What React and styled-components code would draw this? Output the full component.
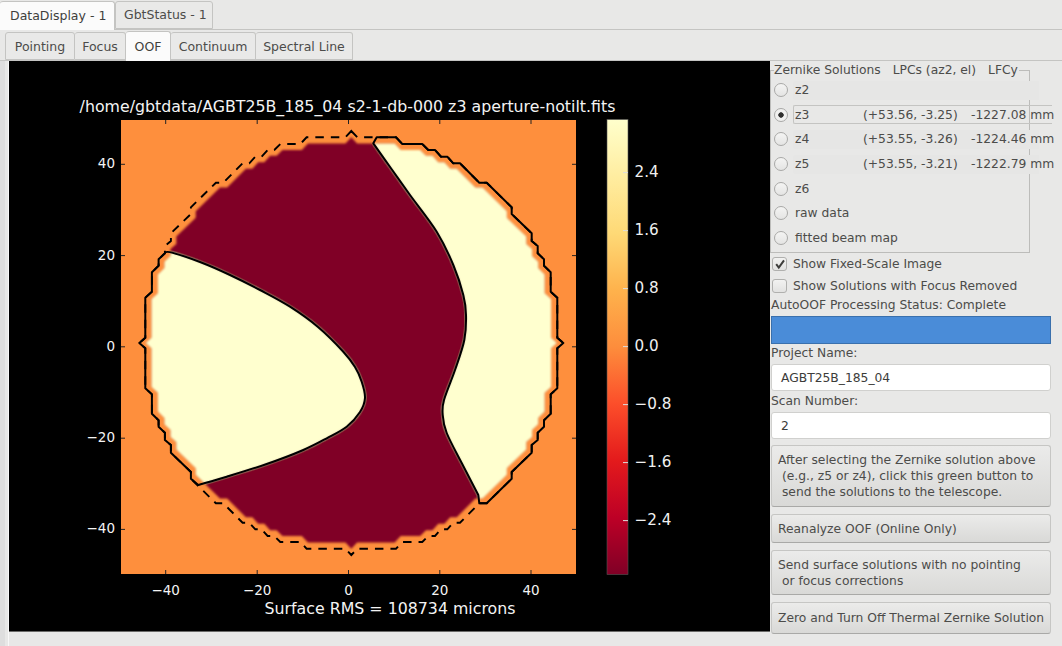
import React from 'react';
import styled, { createGlobalStyle } from 'styled-components';

const GlobalStyle = createGlobalStyle`
  html, body {
    margin: 0;
    padding: 0;
    background: #e8e8e7;
    overflow: hidden;
  }
  body {
    font-family: "DejaVu Sans", sans-serif;
    font-size: 12.3px;
    color: #4c4c4a;
  }
`;

// one quarter of the aperture contour, top tip round to the right tip, relative to its centre
const CX = 351.3;
const CY = 343;
const quarter = [
  [0, -212], [6, -205.7], [44.7, -205.7], [51, -199], [71, -199], [77, -193], [83.7, -193],
  [89.7, -186.3], [96, -186.3], [102, -179.7], [108.7, -179.7], [128, -160.3], [135.4, -160.3],
  [160.4, -135.7], [160.4, -129], [180.4, -109.7], [180.4, -102], [186.4, -97], [186.4, -89.7],
  [192.7, -83.7], [192.7, -77.3], [199.4, -70.7], [199.4, -51.3], [206, -45.3], [206, -5.3], [212, 0],
];

const mirror = (sx, sy) => quarter.map(([dx, dy]) => [CX + sx * dx, CY + sy * dy]);
const arcTopRight = mirror(1, 1);
const arcBottomRight = mirror(1, -1).reverse();
const arcBottomLeft = mirror(-1, -1);
const arcTopLeft = mirror(-1, 1).reverse();

const line = (pts) => pts.map(([x, y]) => `L${x.toFixed(1)} ${y.toFixed(1)}`).join(' ');

// catmull-rom through the points, for the smooth contours
const smooth = (pts) => {
  let d = '';
  for (let i = 0; i < pts.length - 1; i++) {
    const p0 = pts[i - 1] || pts[i];
    const p1 = pts[i];
    const p2 = pts[i + 1];
    const p3 = pts[i + 2] || p2;
    const c1 = [p1[0] + (p2[0] - p0[0]) / 6, p1[1] + (p2[1] - p0[1]) / 6];
    const c2 = [p2[0] - (p3[0] - p1[0]) / 6, p2[1] - (p3[1] - p1[1]) / 6];
    d += `C${c1[0].toFixed(1)} ${c1[1].toFixed(1)} ${c2[0].toFixed(1)} ${c2[1].toFixed(1)} ${p2[0].toFixed(1)} ${p2[1].toFixed(1)} `;
  }
  return d;
};

const ringPath = `M${line([...arcTopRight, ...arcBottomRight, ...arcBottomLeft, ...arcTopLeft]).slice(1)} Z`;

const rightLobePath = `M373.3 143.3 L376.7 137.3 ${line(arcTopRight.slice(2))} ${line(arcBottomRight.slice(0, 15))} L479.3 503.3 L478.3 495 ${smooth([
  [478.3, 495], [461.7, 463], [446.7, 433], [442.7, 415], [444, 400], [455, 370], [464.3, 340],
  [466, 315], [463.3, 295], [453.3, 265], [436.7, 231.7], [410, 195], [391.5, 169], [373.3, 143.3],
])} Z`;

const leftLobePath = `M198.3 485 ${line(arcBottomLeft.slice(13))} ${line(arcTopLeft.slice(1, 8))} L165 252.3 ${smooth([
  [165, 252.3], [172, 252.6], [200, 262], [230, 275], [260, 290], [290, 306.7], [318, 327], [343.3, 351.7],
  [355, 367], [361.7, 381.7], [365, 398], [360, 412], [346.7, 426.7], [326.7, 438.3], [303.3, 450],
  [266.7, 464], [226.7, 476.7], [198.3, 485],
])} Z`;

const xTicks = [
  { x: 165.7, label: '−40' },
  { x: 257.2, label: '−20' },
  { x: 348.5, label: '0' },
  { x: 439.8, label: '20' },
  { x: 531, label: '40' },
];
const yTicks = [
  { y: 164.3, label: '40' },
  { y: 255.6, label: '20' },
  { y: 346.8, label: '0' },
  { y: 438.2, label: '−20' },
  { y: 529.4, label: '−40' },
];
const barTicks = [
  { y: 172.6, label: '2.4' },
  { y: 230.6, label: '1.6' },
  { y: 288.6, label: '0.8' },
  { y: 346.6, label: '0.0' },
  { y: 404.6, label: '−0.8' },
  { y: 462.6, label: '−1.6' },
  { y: 520.6, label: '−2.4' },
];
const colormap = ['#ffffcc', '#ffeda0', '#fed976', '#feb24c', '#fd8d3c', '#fc4e2a', '#e31a1c', '#bd0026', '#800026'];

const innerTabs = [
  { label: 'Pointing', width: 70 },
  { label: 'Focus', width: 51 },
  { label: 'OOF', width: 45, active: true },
  { label: 'Continuum', width: 85 },
  { label: 'Spectral Line', width: 97 },
];

const solutions = [
  { name: 'z2', ghost: true },
  { name: 'z3', lpc: '(+53.56, -3.25)', lfc: '-1227.08 mm', selected: true },
  { name: 'z4', lpc: '(+53.55, -3.26)', lfc: '-1224.46 mm', ghost: true },
  { name: 'z5', lpc: '(+53.55, -3.21)', lfc: '-1222.79 mm', ghost: true },
  { name: 'z6' },
  { name: 'raw data' },
  { name: 'fitted beam map' },
];

const Plot = () => (
  <PlotSvg viewBox="9 61 761 570" width="761" height="570">
    <defs>
      <clipPath id="aperture">
        <path d={ringPath} transform={`translate(${CX} ${CY}) scale(0.97) translate(${-CX} ${-CY})`} />
      </clipPath>
      <clipPath id="axes">
        <rect x="121" y="120" width="455" height="454" />
      </clipPath>
      <filter id="soften" x="-5%" y="-5%" width="110%" height="110%">
        <feGaussianBlur stdDeviation="1.2" />
      </filter>
      <linearGradient id="colorbar" x1="0" y1="0" x2="0" y2="1">
        {colormap.map((c, i) => (
          <stop key={c} offset={i / (colormap.length - 1)} stopColor={c} />
        ))}
      </linearGradient>
    </defs>

    <text x="347.5" y="112" fontSize="15.8" fill="#f4f4f4" textAnchor="middle">
      /home/gbtdata/AGBT25B_185_04 s2-1-db-000 z3 aperture-notilt.fits
    </text>

    <rect x="121" y="120" width="455" height="454" fill="#fe8f3d" />
    <g clipPath="url(#axes)">
      <g filter="url(#soften)">
        <g clipPath="url(#aperture)">
          <rect x="121" y="120" width="455" height="454" fill="#800026" />
          <path d={leftLobePath} fill="#ffffcf" />
          <path d={rightLobePath} fill="#ffffcf" />
        </g>
      </g>
      <path d={ringPath} fill="none" stroke="#000" strokeWidth="1.9" strokeDasharray="8.5 7" />
      <path d={leftLobePath} fill="none" stroke="#000" strokeWidth="2" strokeLinejoin="round" />
      <path d={rightLobePath} fill="none" stroke="#000" strokeWidth="2" strokeLinejoin="round" />
    </g>

    {xTicks.map((t) => (
      <g key={t.x}>
        <path d={`M${t.x} 120v4M${t.x} 574v-4`} stroke="#222" strokeWidth="1" />
        <text x={t.x} y="595" fontSize="13.5" fill="#f4f4f4" textAnchor="middle">{t.label}</text>
      </g>
    ))}
    {yTicks.map((t) => (
      <g key={t.y}>
        <path d={`M121 ${t.y}h4M576 ${t.y}h-4`} stroke="#222" strokeWidth="1" />
        <text x="115" y={t.y + 4} fontSize="13.5" fill="#f4f4f4" textAnchor="end">{t.label}</text>
      </g>
    ))}

    <rect x="607" y="119.5" width="21" height="455" fill="url(#colorbar)" stroke="#555" strokeWidth="0.6" />
    {barTicks.map((t) => (
      <g key={t.y}>
        <path d={`M623 ${t.y}h5`} stroke="#ddd" strokeWidth="1" />
        <text x="634.5" y={t.y + 4.5} fontSize="15.2" fill="#f0f0f0">{t.label}</text>
      </g>
    ))}

    <text x="390" y="614" fontSize="15.8" fill="#f4f4f4" textAnchor="middle">Surface RMS = 108734 microns</text>
  </PlotSvg>
);

export default function App() {
  return (
    <Page>
      <GlobalStyle />
      <OuterTabs>
        <OuterTab $active>DataDisplay - 1</OuterTab>
        <OuterTab>GbtStatus - 1</OuterTab>
      </OuterTabs>
      <InnerTabs>
        {innerTabs.map((t) => (
          <InnerTab key={t.label} $width={t.width} $active={t.active}>{t.label}</InnerTab>
        ))}
      </InnerTabs>
      <Pane>
        <Plot />
        <Side>
          <SolutionsBox>
            <BoxTitle>
              <span>Zernike Solutions</span>
              <span>LPCs (az2, el)</span>
              <span>LFCy</span>
            </BoxTitle>
            {solutions.map((s) => (
              <SolutionRow key={s.name}>
                <Radio $checked={s.selected} />
                <SolutionText $selected={s.selected} $ghost={s.ghost}>
                  <SolutionName>{s.name}</SolutionName>
                  {s.lpc && <SolutionLpc>{s.lpc}</SolutionLpc>}
                  {s.lfc && <span>{s.lfc}</span>}
                </SolutionText>
              </SolutionRow>
            ))}
          </SolutionsBox>

          <CheckRow>
            <CheckBox>
              <svg width="12" height="12" viewBox="0 0 12 12">
                <path d="M2.2 6.2 L4.8 9.6 L10 2.4" fill="none" stroke="#3d3d3b" strokeWidth="2" />
              </svg>
            </CheckBox>
            Show Fixed-Scale Image
          </CheckRow>
          <CheckRow>
            <CheckBox />
            Show Solutions with Focus Removed
          </CheckRow>

          <FieldLabel $top={1}>AutoOOF Processing Status: Complete</FieldLabel>
          <ProgressBar />
          <FieldLabel $top={2}>Project Name:</FieldLabel>
          <TextField>AGBT25B_185_04</TextField>
          <FieldLabel $top={3}>Scan Number:</FieldLabel>
          <TextField>2</TextField>

          <ButtonStack>
            <ActionButton $height={62}>{'After selecting the Zernike solution above\n (e.g., z5 or z4), click this green button to\n send the solutions to the telescope.'}</ActionButton>
            <ActionButton $height={29}>Reanalyze OOF (Online Only)</ActionButton>
            <ActionButton $height={45}>{'Send surface solutions with no pointing\n or focus corrections'}</ActionButton>
            <ActionButton $height={32}>Zero and Turn Off Thermal Zernike Solution</ActionButton>
          </ButtonStack>
        </Side>
      </Pane>
    </Page>
  );
}

const Page = styled.div`
  width: 1062px;
  height: 646px;
  display: flex;
  flex-direction: column;
  overflow: hidden;
`;

const OuterTabs = styled.div`
  height: 29px;
  display: flex;
  align-items: flex-end;
  border-bottom: 1px solid #c4c4c2;
`;

const OuterTab = styled.div`
  height: ${(p) => (p.$active ? '29px' : '28px')};
  margin-bottom: ${(p) => (p.$active ? '-1px' : '0')};
  width: ${(p) => (p.$active ? '115px' : '98px')};
  box-sizing: border-box;
  display: flex;
  align-items: center;
  padding-left: ${(p) => (p.$active ? '10px' : '8px')};
  padding-bottom: ${(p) => (p.$active ? '2px' : '1px')};
  background: ${(p) => (p.$active ? '#fbfbfb' : '#e9e9e8')};
  border: 1px solid #c4c4c2;
  border-bottom: ${(p) => (p.$active ? 'none' : '1px solid #c4c4c2')};
  border-left: ${(p) => (p.$active ? 'none' : '1px solid #c4c4c2')};
  border-radius: 3px 3px 0 0;
  font-size: 12.5px;
  color: ${(p) => (p.$active ? '#3f3f3d' : '#4c4c4a')};
  white-space: nowrap;
`;

const InnerTabs = styled.div`
  height: 30px;
  display: flex;
  align-items: flex-end;
  padding-left: 5px;
  border-bottom: 1px solid #c4c4c2;
`;

const InnerTab = styled.div`
  width: ${(p) => p.$width}px;
  height: ${(p) => (p.$active ? '30px' : '28px')};
  margin-bottom: ${(p) => (p.$active ? '-1px' : '0')};
  padding-bottom: ${(p) => (p.$active ? '1px' : '0')};
  box-sizing: border-box;
  display: flex;
  align-items: center;
  justify-content: center;
  background: ${(p) => (p.$active ? '#fbfbfb' : '#e9e9e8')};
  border: 1px solid #c4c4c2;
  border-left: none;
  border-bottom: ${(p) => (p.$active ? 'none' : '1px solid #c4c4c2')};
  border-radius: 3px 3px 0 0;
  font-size: 12.5px;
  white-space: nowrap;
  color: ${(p) => (p.$active ? '#3f3f3d' : '#4c4c4a')};

  &:first-child {
    border-left: 1px solid #c4c4c2;
  }
`;

const Pane = styled.div`
  flex: 1;
  min-height: 0;
  display: flex;
  align-items: flex-start;
  padding-left: 9px;
  background: linear-gradient(90deg, #dedede 0 5px, #e8e8e7 5px 8px, #f8f8f8 8px 9px, #e8e8e7 9px);
`;

const PlotSvg = styled.svg`
  display: block;
  flex: none;
  background: #000;
  border-bottom: 1px solid #6a6a68;
  font-family: "DejaVu Sans", sans-serif;
`;

const Side = styled.div`
  flex: 1;
  min-width: 0;
  display: flex;
  flex-direction: column;
  padding: 9px 11px 0 1px;
  overflow: hidden;
`;

const SolutionsBox = styled.div`
  position: relative;
  width: 260px;
  height: 183px;
  margin-left: -1px;
  box-sizing: border-box;
  border: 1px solid #bcbcba;
  padding: 7px 0 0 3px;
  display: flex;
  flex-direction: column;
`;

const BoxTitle = styled.div`
  position: absolute;
  top: -7px;
  left: 3px;
  padding-right: 1px;
  display: flex;
  gap: 12px;
  background: #e8e8e7;
  line-height: 13px;
  white-space: nowrap;
`;

const SolutionRow = styled.div`
  height: 24.6px;
  flex: none;
  display: flex;
  align-items: center;
  gap: 5px;
  white-space: nowrap;
`;

const Radio = styled.span`
  flex: none;
  width: 14px;
  height: 14px;
  box-sizing: border-box;
  border-radius: 50%;
  border: 1px solid #a9a9a7;
  background: ${(p) =>
    p.$checked
      ? 'radial-gradient(circle, #2f2f2e 0 2.4px, #f0f0ef 3px)'
      : 'linear-gradient(#f4f4f3, #e4e4e3)'};
`;

const SolutionText = styled.div`
  flex: none;
  width: ${(p) => (p.$ghost ? '246px' : '259px')};
  height: 19px;
  box-sizing: border-box;
  display: flex;
  align-items: center;
  padding-left: 1px;
  background: ${(p) => (p.$ghost ? '#e6e6e5' : 'transparent')};
  border: 1px solid ${(p) => (p.$selected ? '#c4c4c2' : 'transparent')};
  border-right: none;
  border-radius: 2px 0 0 2px;
`;

const SolutionName = styled.span`
  width: 68px;
  flex: none;
`;

const SolutionLpc = styled.span`
  width: 108px;
  flex: none;
`;

const CheckRow = styled.div`
  height: 22px;
  display: flex;
  align-items: center;
  gap: 6px;
  white-space: nowrap;
`;

const CheckBox = styled.span`
  flex: none;
  width: 15px;
  height: 14px;
  box-sizing: border-box;
  margin-left: 1px;
  border: 1px solid #b0b0ae;
  border-radius: 3px;
  background: linear-gradient(#f2f2f1, #e2e2e1);
  display: flex;
  align-items: center;
  justify-content: center;
`;

const FieldLabel = styled.div`
  margin-top: ${(p) => p.$top}px;
  line-height: 14px;
`;

const ProgressBar = styled.div`
  height: 28px;
  margin-top: 4px;
  box-sizing: border-box;
  background: #4a8cd8;
  border: 1px solid #3a70ad;
`;

const TextField = styled.div`
  height: 27px;
  box-sizing: border-box;
  margin-top: 4px;
  padding-left: 9px;
  display: flex;
  align-items: center;
  background: #fff;
  border: 1px solid #d0d0ce;
  border-radius: 3px;
  color: #3c3c3a;
`;

const ButtonStack = styled.div`
  display: flex;
  flex-direction: column;
  gap: 7px;
  margin-top: 6px;
`;

const ActionButton = styled.div`
  height: ${(p) => p.$height}px;
  box-sizing: border-box;
  display: flex;
  align-items: center;
  padding-left: 6px;
  white-space: pre;
  line-height: 16px;
  background: linear-gradient(#ebebea, #d9d9d7);
  border: 1px solid #c6c6c4;
  border-bottom-color: #a9a9a7;
  border-radius: 3px;
`;
